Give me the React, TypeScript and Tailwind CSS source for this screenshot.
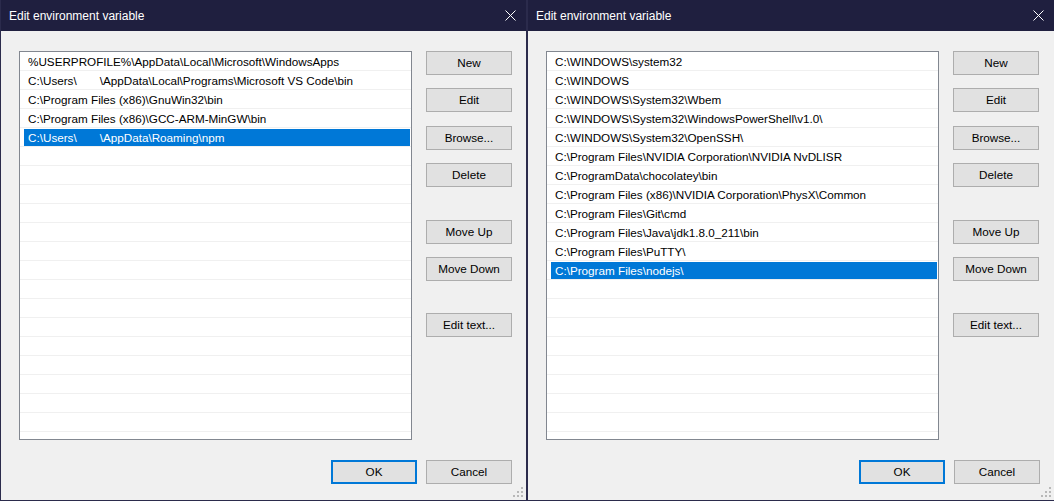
import React from 'react';

type Dialog = {
  rows: React.ReactNode[];
  selected: number;
};

const gap = <span className="inline-block w-[23px]" />;

const leftRows: React.ReactNode[] = [
  '%USERPROFILE%\\AppData\\Local\\Microsoft\\WindowsApps',
  <>C:\Users\{gap}\AppData\Local\Programs\Microsoft VS Code\bin</>,
  'C:\\Program Files (x86)\\GnuWin32\\bin',
  'C:\\Program Files (x86)\\GCC-ARM-MinGW\\bin',
  <>C:\Users\{gap}\AppData\Roaming\npm</>,
];

const rightRows: React.ReactNode[] = [
  'C:\\WINDOWS\\system32',
  'C:\\WINDOWS',
  'C:\\WINDOWS\\System32\\Wbem',
  'C:\\WINDOWS\\System32\\WindowsPowerShell\\v1.0\\',
  'C:\\WINDOWS\\System32\\OpenSSH\\',
  'C:\\Program Files\\NVIDIA Corporation\\NVIDIA NvDLISR',
  'C:\\ProgramData\\chocolatey\\bin',
  'C:\\Program Files (x86)\\NVIDIA Corporation\\PhysX\\Common',
  'C:\\Program Files\\Git\\cmd',
  'C:\\Program Files\\Java\\jdk1.8.0_211\\bin',
  'C:\\Program Files\\PuTTY\\',
  'C:\\Program Files\\nodejs\\',
];

function Button({ label, className = '', primary = false }: { label: string; className?: string; primary?: boolean }) {
  return (
    <div
      className={`h-[24px] w-[86px] flex items-center justify-center bg-[#e1e1e1] text-black ${
        primary ? 'border-2 border-[#0078d7]' : 'border border-[#adadad]'
      } ${className}`}
    >
      {label}
    </div>
  );
}

function CloseIcon() {
  return (
    <svg width="11" height="11" viewBox="0 0 11 11" className="shrink-0">
      <path d="M0.5 0.5 L10.5 10.5 M10.5 0.5 L0.5 10.5" stroke="#ffffff" strokeWidth="1" />
    </svg>
  );
}

function Grip() {
  const dots = [
    [8, 0],
    [4, 4],
    [8, 4],
    [0, 8],
    [4, 8],
    [8, 8],
  ];
  return (
    <svg width="10" height="10" viewBox="0 0 10 10" className="absolute right-[3px] bottom-[3px]">
      {dots.map(([x, y], i) => (
        <rect key={i} x={x} y={y} width="2" height="2" fill="#b8b8b8" />
      ))}
    </svg>
  );
}

function EnvDialog({ rows, selected, borderRight }: Dialog & { borderRight: boolean }) {
  const lines = Array.from({ length: 21 }, (_, i) => rows[i] ?? null);
  return (
    <div
      className={`relative w-[527px] h-[501px] flex flex-col bg-[#f0f0f0] border-l border-b border-[#2b2b4c] ${
        borderRight ? 'border-r' : ''
      }`}
    >
      {/* Title bar */}
      <div className="h-[31px] shrink-0 bg-[#1f1f3f] flex items-center justify-between pl-[8px] pr-[10px] text-white text-[12px]">
        <span>Edit environment variable</span>
        <CloseIcon />
      </div>

      <div className="flex flex-1 pt-[20px] pl-[18px] pr-[14px]">
        {/* List */}
        <div className="w-[393px] h-[389px] shrink-0 bg-white border border-[#828790] overflow-hidden">
          {lines.map((row, i) => (
            <div key={i} className="h-[19px] border-b border-[#f0f0f0] pl-[4px] pr-[1px] pt-[1px]">
              <div
                className={`h-[17px] flex items-center pl-[4px] whitespace-nowrap ${
                  i === selected ? 'bg-[#0078d7] text-white' : 'text-black'
                }`}
              >
                {row}
              </div>
            </div>
          ))}
        </div>

        {/* Side buttons */}
        <div className="flex flex-col ml-[14px]">
          <Button label="New" />
          <Button label="Edit" className="mt-[13px]" />
          <Button label="Browse..." className="mt-[14px]" />
          <Button label="Delete" className="mt-[13px]" />
          <Button label="Move Up" className="mt-[33px]" />
          <Button label="Move Down" className="mt-[13px]" />
          <Button label="Edit text..." className="mt-[32px]" />
        </div>
      </div>

      {/* Footer */}
      <div className="flex justify-end gap-[9px] pr-[14px] pb-[16px]">
        <Button label="OK" primary />
        <Button label="Cancel" />
      </div>

      <Grip />
    </div>
  );
}

export default function App() {
  return (
    <div className="flex w-[1054px] h-[501px] overflow-hidden bg-[#f0f0f0] font-['Liberation_Sans',sans-serif] text-[11.7px] leading-none">
      <EnvDialog rows={leftRows} selected={4} borderRight />
      <EnvDialog rows={rightRows} selected={11} borderRight={false} />
    </div>
  );
}
